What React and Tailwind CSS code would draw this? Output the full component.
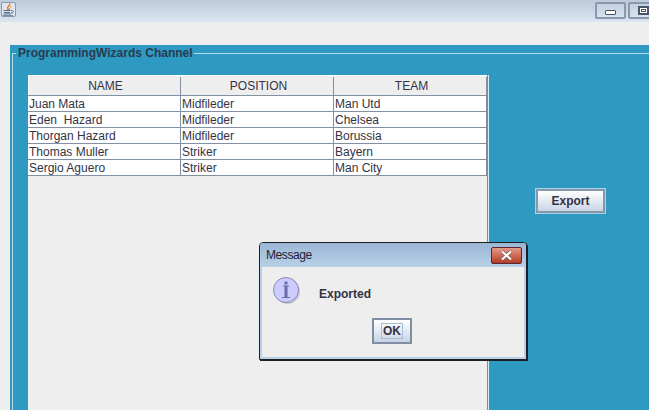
const rows = [
  ["Juan Mata", "Midfileder", "Man Utd"],
  ["Eden  Hazard", "Midfileder", "Chelsea"],
  ["Thorgan Hazard", "Midfileder", "Borussia"],
  ["Thomas Muller", "Striker", "Bayern"],
  ["Sergio Aguero", "Striker", "Man City"],
];

function JavaIcon() {
  return (
    <svg width="13" height="13" viewBox="0 0 13 13">
      <path d="M7.5 0.5 C8.5 2.5 5 3.5 5.5 5.5 C6 7 7.5 6.5 7.5 5" fill="none" stroke="#e8762c" strokeWidth="1.4" />
      <path d="M9 2.5 C9.5 4 7.5 5 7 6.5" fill="none" stroke="#f0a040" strokeWidth="1" />
      <path d="M1.5 7.5 H8.5 M2 9.5 H8 M1.5 11 H9" stroke="#4a6a8c" strokeWidth="1" fill="none" />
      <path d="M9 7.5 C12 7.5 12 10 9 10" stroke="#4a6a8c" strokeWidth="1" fill="none" />
      <path d="M0.5 12.5 H11" stroke="#7b93ad" strokeWidth="1" />
    </svg>
  );
}

function TitleButton({ children, className }) {
  return (
    <div className={"h-[17px] w-[31px] shrink-0 rounded-[2px] border-2 border-[#8a98ad] bg-gradient-to-b from-[#c3d1e0] to-[#d6e2ee] flex " + className}>
      {children}
    </div>
  );
}

export default function App() {
  return (
    <div className="relative h-[410px] w-[649px] overflow-hidden bg-[#eeeeee] font-['Liberation_Sans',Arial,sans-serif] text-[12px] text-[#333344]">
      <div className="flex h-[22px] items-start justify-between bg-gradient-to-b from-[#bccada] to-[#dae5f1]">
        <div className="mt-[2px] ml-[1px] flex h-[15px] w-[15px] items-center justify-center rounded-[2px] border border-[#8a98ad] bg-[#dfe6ee]">
          <JavaIcon />
        </div>
        <div className="mt-[2px] flex w-[54px] gap-[2px] overflow-hidden">
          <TitleButton className="justify-center pt-[6px]">
            <div className="h-[5px] w-[11px] rounded-[1px] border border-[#4a5568] bg-white" />
          </TitleButton>
          <TitleButton className="items-center justify-start pl-[8px]">
            <div className="flex h-[9px] w-[11px] shrink-0 items-center justify-center border-2 border-[#4a5568] bg-white">
              <div className="h-[3px] w-[5px] border border-[#4a5568]" />
            </div>
          </TitleButton>
        </div>
      </div>

      <div className="relative mt-[23px] ml-[10px] flex h-[365px] bg-[#2e9ac2] pt-[8px] pl-[2px]">
        <div className="flex flex-1 border-t border-l border-[#b5dbe9] pt-[21px] pl-[15px]">
          <div className="h-[400px] w-[460px] border-r border-[#808a99] bg-[#eeeeee]">
            <div className="flex h-[21px] border-t border-[#ffffff] border-b border-b-[#8290a3] bg-[#eeeeee] pt-[1px] leading-[18px] text-center">
              <div className="w-[153px] border-r border-[#8290a3] border-l border-l-white pl-[2px]">NAME</div>
              <div className="w-[153px] border-r border-[#8290a3] pl-[3px]">POSITION</div>
              <div className="w-[153px] border-r border-[#8290a3] pl-[3px]">TEAM</div>
            </div>
            {rows.map((r) => (
              <div key={r[0]} className="flex h-[16px] border-b border-[#8290a3] bg-white leading-[15px] whitespace-pre">
                <div className="w-[153px] border-r border-[#8290a3] pt-[1px] pl-[1px]">{r[0]}</div>
                <div className="w-[153px] border-r border-[#8290a3] pt-[1px] pl-[1px]">{r[1]}</div>
                <div className="w-[153px] border-r border-[#8290a3] pt-[1px] pl-[1px]">{r[2]}</div>
              </div>
            ))}
          </div>
          <div className="h-[400px] w-[1px] bg-[#dcebf1]" />
          <div className="ml-[46px] mt-[113px] flex h-[26px] w-[71px] items-center justify-center border border-[#a8d3e5]">
            <div className="flex h-full w-full items-center justify-center border-2 border-[#8597ab] bg-gradient-to-b from-white to-[#c8d5e5] font-bold">
              Export
            </div>
          </div>
        </div>
        <div className="absolute top-[1px] left-[6px] bg-[#2e9ac2] pl-[2px] pr-[1px] font-bold leading-[15px] text-[#2a3a50]">
          ProgrammingWizards Channel
        </div>
      </div>

      <div className="absolute top-[242px] left-[259px] flex h-[118px] w-[268px] flex-col rounded-t-[4px] border border-[#1c2026] bg-[#eeeeee] shadow-[1px_1px_0_#1c2026]">
        <div className="flex h-[24px] items-center justify-between rounded-t-[3px] bg-gradient-to-b from-[#9ab6d4] to-[#b8d1e8] pr-[4px] pl-[6px] text-[12px] tracking-[-0.4px] text-[#222233]">
          <span>Message</span>
          <div className="flex h-[17px] w-[31px] items-center justify-center rounded-[2px] border border-[#5c2530] bg-gradient-to-b from-[#e09a8a] via-[#cf6a56] to-[#b03c28]">
            <svg width="15" height="11" viewBox="0 0 15 11">
              <path d="M3 1.5 L12 9.5 M12 1.5 L3 9.5" stroke="#6b5a5a" strokeWidth="3.4" />
              <path d="M3 1.5 L12 9.5 M12 1.5 L3 9.5" stroke="#ffffff" strokeWidth="2.2" />
            </svg>
          </div>
        </div>
        <div className="flex flex-1 flex-col border-x-2 border-b-2 border-[#b8d1e8]">
          <div className="flex items-center pt-[10px] pl-[11px]">
            <svg width="28" height="28" viewBox="0 0 28 28" className="shrink-0">
              <circle cx="14.5" cy="14.5" r="12.5" fill="#9a9a9a" opacity="0.45" />
              <circle cx="13" cy="13" r="12.5" fill="#ccccff" stroke="#8a86bd" strokeWidth="1" />
              <rect x="11.5" y="4.5" width="3" height="3" fill="#6a6aa5" />
              <rect x="11.5" y="9" width="3" height="11" fill="#6a6aa5" />
              <rect x="10" y="8.5" width="6" height="1" fill="#6a6aa5" />
              <rect x="9" y="20" width="8" height="1" fill="#6a6aa5" />
            </svg>
            <span className="mt-[6px] ml-[18px] font-bold">Exported</span>
          </div>
          <div className="mt-[13px] flex justify-center pr-[2px]">
            <div className="flex h-[26px] w-[40px] items-center justify-center border-2 border-[#7f8fa3] bg-gradient-to-b from-white to-[#c8d5e5]">
              <span className="border border-[#a9bdd2] px-[1px] leading-[14px] font-bold">OK</span>
            </div>
          </div>
        </div>
      </div>
    </div>
  );
}
